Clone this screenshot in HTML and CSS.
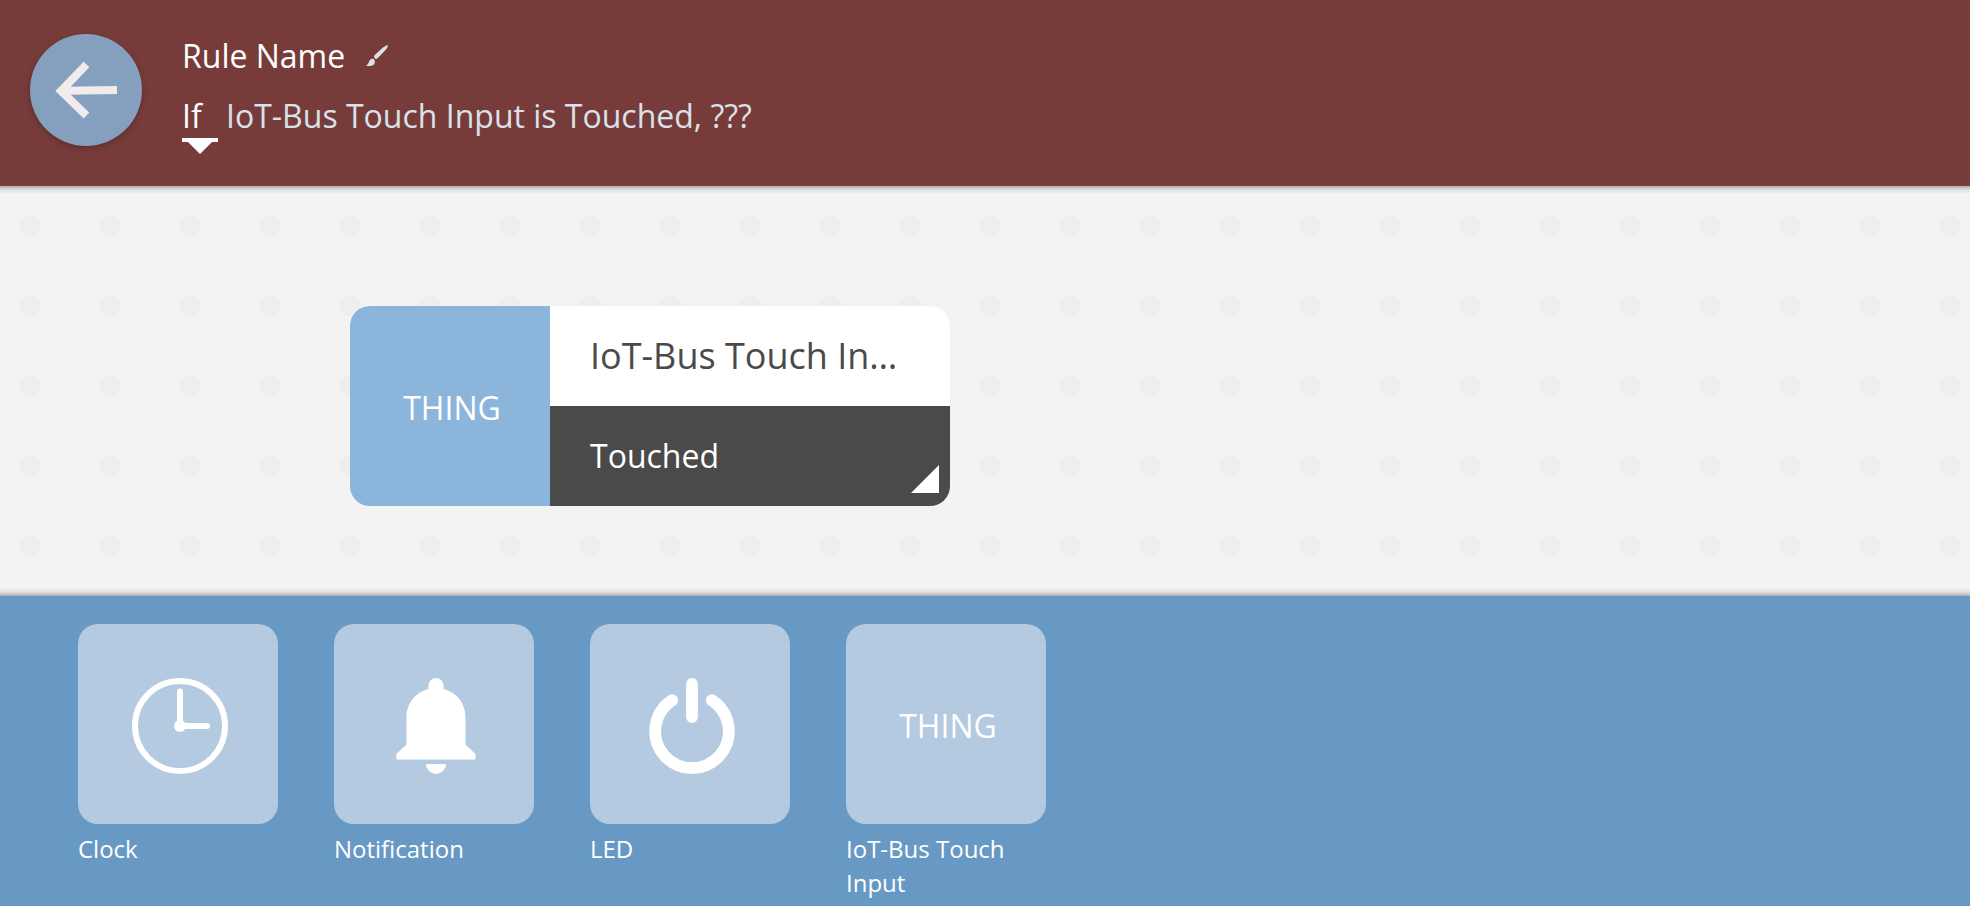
FILE: index.html
```html
<!DOCTYPE html>
<html lang="en">
<head>
<meta charset="utf-8">
<title>Rule Name</title>
<link rel="stylesheet" href="styles.css">
</head>
<body>
<header class="header">
  <button class="back" type="button" aria-label="Back">
    <svg class="back-icon" viewBox="0 0 112 112" aria-hidden="true"><path d="M56.500 30.500L31 57L56.500 81.500M36 56.700L87 56"/></svg>
  </button>
  <div class="rule">
    <button class="rule-name" type="button">
      <span>Rule Name</span>
      <svg class="brush" viewBox="0 0 22 22" aria-hidden="true"><path d="M21.700 .2C20.500 0 19 1 17 2.500L9 9.800C7.800 11 7.800 12 8.600 13C9.500 14.200 10.700 14.200 11.800 13L19.500 5C21.500 2.800 22.500 .8 21.700 .2ZM7.300 14C5.500 13.400 4 14.300 3.200 16.300C2.600 18.300 1.500 20 0 20.500C3 21.700 7 21.200 8.500 18.500C9.300 17 9 15 7.300 14Z"/></svg>
    </button>
    <div class="sentence">
      <button class="clause" type="button">If</button>
      <span class="condition">IoT-Bus Touch Input is Touched, ???</span>
    </div>
  </div>
</header>
<main class="canvas">
  <article class="card">
    <div class="card-thing">THING</div>
    <div class="card-body">
      <h2 class="card-title">IoT-Bus Touch Input</h2>
      <button class="card-event" type="button">Touched</button>
    </div>
  </article>
</main>
<footer class="dock">
  <button class="item" type="button">
    <span class="tile"><svg class="icon" viewBox="0 0 96 96" aria-hidden="true"><g fill="none" stroke="#fff" stroke-width="6" stroke-linecap="round"><circle cx="48" cy="48" r="45"/><path d="M48 13.500V48H75"/></g><circle cx="48" cy="48" r="6" fill="#fff"/></svg></span>
    <span class="label">Clock</span>
  </button>
  <button class="item" type="button">
    <span class="tile"><svg class="icon" viewBox="0 0 96 96" aria-hidden="true"><path fill="#fff" d="M40.500 11V7.500a7.500 7.500 0 0 1 15 0V11C68 14 77.500 25 77.500 39V66.500L87.500 76V81.500H8.300V76L18.500 66.500V39C18.500 25 28 14 40.500 11ZM38 86H58a10 10 0 0 1-20 0Z"/></svg></span>
    <span class="label">Notification</span>
  </button>
  <button class="item" type="button">
    <span class="tile"><svg class="icon" viewBox="0 0 96 96" aria-hidden="true"><path fill="none" stroke="#fff" stroke-width="11.800" stroke-linecap="round" d="M48 6V39M28.200 22.200A36.800 36.800 0 1 0 67.800 22.200"/></svg></span>
    <span class="label">LED</span>
  </button>
  <button class="item" type="button">
    <span class="tile">THING</span>
    <span class="label">IoT-Bus Touch Input</span>
  </button>
</footer>
</body>
</html>
```
FILE: styles.css
```css
* {
  box-sizing: border-box;
}

body {
  margin: 0;
  min-height: 100vh;
  display: flex;
  flex-direction: column;
  font-family: "Open Sans", "Noto Sans", sans-serif;
  font-size: 32px;
  line-height: 44px;
  color: #fff;
}

button {
  margin: 0;
  padding: 0;
  border: 0;
  background: none;
  color: inherit;
  font: inherit;
  text-align: left;
  cursor: pointer;
}

.header {
  display: flex;
  align-items: flex-start;
  gap: 40px;
  padding: 34px 30px 40px;
  background: #773c3a;
}

.back {
  flex: none;
  width: 112px;
  height: 112px;
  border-radius: 50%;
  background: #859fbe;
  box-shadow: 0 2px 6px rgba(0, 0, 0, 0.25);
}

.back-icon {
  display: block;
  fill: none;
  stroke: #f2ebeb;
  stroke-width: 8;
}

.rule {
  display: flex;
  flex-direction: column;
  align-items: flex-start;
  gap: 16px;
}

.rule-name {
  display: flex;
  align-items: center;
  gap: 21px;
}

.brush {
  width: 22px;
  height: 22px;
  fill: #d9e2ea;
}

.sentence {
  display: flex;
  gap: 8px;
}

.clause {
  position: relative;
  width: 36px;
  height: 48px;
  padding-bottom: 4px;
  border-bottom: 4px solid #fff;
}

.clause::after {
  content: "";
  position: absolute;
  top: 48px;
  left: 6px;
  border: 12px solid transparent;
  border-top-color: #fff;
  border-bottom: 0;
}

.condition {
  color: #d9e2ea;
}

.canvas {
  flex: 1;
  padding: 120px 30px 90px 350px;
  background:
    linear-gradient(to bottom, rgba(0, 0, 0, 0.28), rgba(0, 0, 0, 0.08) 4px, transparent 8px),
    linear-gradient(to top, rgba(0, 0, 0, 0.28), rgba(0, 0, 0, 0.08) 4px, transparent 8px),
    radial-gradient(circle, #eee 10px, transparent 11px) -10px 0 / 80px 80px,
    #f3f3f3;
}

.card {
  display: flex;
  width: 600px;
  max-width: 100%;
  border-radius: 20px;
  overflow: hidden;
}

.card-thing {
  flex: none;
  display: flex;
  align-items: center;
  justify-content: center;
  width: 200px;
  height: 200px;
  padding: 4px 0 0 4px;
  background: #8cb5dc;
}

.card-body {
  flex: 1;
  min-width: 0;
  display: flex;
  flex-direction: column;
}

.card-title {
  margin: 0;
  padding: 0 40px;
  background: #fff;
  color: #4a4a4a;
  font-size: 36px;
  font-weight: 400;
  line-height: 100px;
  white-space: nowrap;
  overflow: hidden;
  text-overflow: ellipsis;
}

.card-event {
  position: relative;
  padding: 0 40px;
  background: #4a4a4a;
  line-height: 100px;
}

.card-event::after {
  content: "";
  position: absolute;
  right: 11px;
  bottom: 13px;
  border-left: 28px solid transparent;
  border-bottom: 28px solid #fff;
}

.dock {
  display: flex;
  align-items: flex-start;
  gap: 56px;
  padding: 28px 78px 6px;
  background: #6899c5;
}

.item {
  display: flex;
  flex-direction: column;
  gap: 8px;
  width: 200px;
}

.tile {
  display: flex;
  align-items: center;
  justify-content: center;
  width: 200px;
  height: 200px;
  padding: 4px 0 0 4px;
  border-radius: 20px;
  background: #b3cae0;
}

.icon {
  width: 96px;
  height: 96px;
}

.label {
  font-size: 24px;
  line-height: 34px;
}
```
